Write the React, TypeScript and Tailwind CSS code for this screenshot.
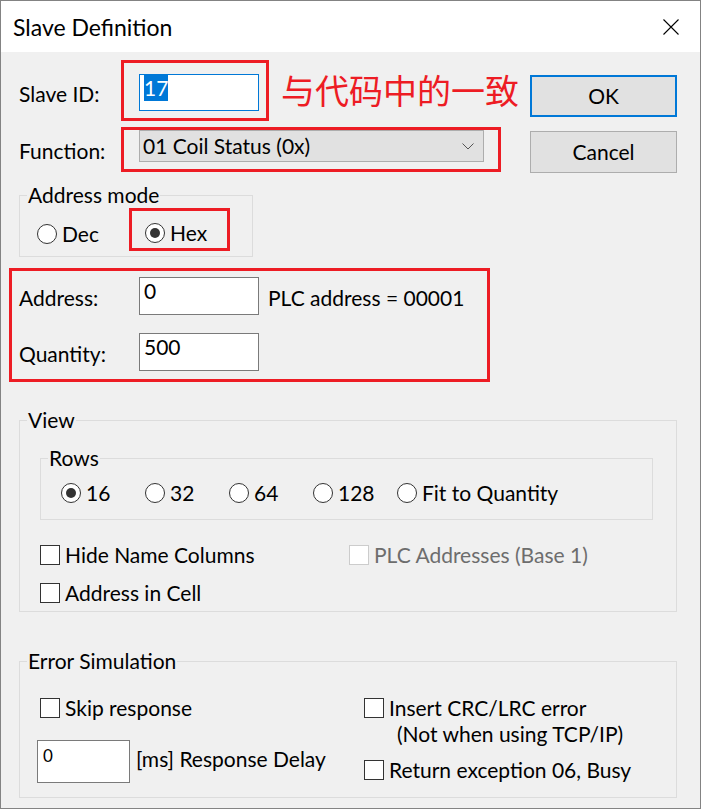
import clsx from "clsx";
import type { ReactNode } from "react";

function Radio({
  label,
  checked = false,
  className,
}: {
  label: string;
  checked?: boolean;
  className?: string;
}) {
  return (
    <label className={clsx("flex items-center gap-[5px]", className)}>
      <span className="flex h-[20px] w-[20px] shrink-0 items-center justify-center rounded-full border border-[#333333] bg-white">
        {checked && <span className="h-[10px] w-[10px] rounded-full bg-[#333333]" />}
      </span>
      <span>{label}</span>
    </label>
  );
}

function Check({
  label,
  disabled = false,
  className,
}: {
  label: string;
  disabled?: boolean;
  className?: string;
}) {
  return (
    <label className={clsx("flex items-center gap-[5px]", className)}>
      <span
        className={clsx(
          "h-[20px] w-[20px] shrink-0 border bg-white",
          disabled ? "border-[#cccccc]" : "border-[#333333]",
        )}
      />
      <span className={disabled ? "text-[#6d6d6d]" : undefined}>{label}</span>
    </label>
  );
}

function GroupBox({
  title,
  className,
  children,
}: {
  title: string;
  className?: string;
  children: ReactNode;
}) {
  return (
    <fieldset className={clsx("border border-[#dcdcdc]", className)}>
      <legend className="ml-[7px] px-[1px] leading-[26px]">{title}</legend>
      {children}
    </fieldset>
  );
}

function TextBox({ value }: { value: string }) {
  return (
    <div className="h-[38px] w-[120px] border border-[#7a7a7a] bg-white pl-[4px]">
      {value}
    </div>
  );
}

export default function App() {
  return (
    <div className="flex h-[809px] w-[701px] flex-col overflow-hidden border border-[#838383] bg-[#f0f0f0] font-['Lato',sans-serif] text-[21px] leading-[26px] text-black">
      {/* title bar */}
      <div className="flex h-[51px] shrink-0 items-center justify-between bg-white pl-[12px] pr-[21px]">
        <span className="text-[23px]">Slave Definition</span>
        <svg width="16" height="16" viewBox="0 0 16 16" fill="none">
          <path d="M0.5 0.5 L15.5 15.5 M15.5 0.5 L0.5 15.5" stroke="#000" strokeWidth="1.1" />
        </svg>
      </div>

      {/* slave id / function + buttons */}
      <div className="flex shrink-0 pt-[8px]">
        <div className="w-[529px]">
          <div className="flex items-start">
            <span className="mt-[21px] w-[120px] pl-[18px]">Slave ID:</span>
            <div className="h-[61px] w-[148px] border-[3px] border-[#ed1c24] pl-[15px] pt-[11px]">
              <div className="h-[37px] w-[120px] border border-[#0078d7] bg-white pl-[4px]">
                <span className="inline-block h-[26px] bg-[#0078d7] text-white">17</span>
              </div>
            </div>
            <span className="ml-[12px] mt-[13px] font-['Noto_Sans_CJK_SC',sans-serif] text-[34px] leading-[34px] text-[#ed1c24]">
              与代码中的一致
            </span>
          </div>
          <div className="mt-[6px] flex items-start">
            <span className="mt-[11px] w-[120px] pl-[18px]">Function:</span>
            <div className="h-[45px] w-[380px] border-[3px] border-[#ed1c24] pl-[15px]">
              <div className="flex h-[32px] w-[345px] items-center justify-between border border-[#adadad] bg-[#e1e1e1] pl-[3px] pr-[9px]">
                <span>01 Coil Status (0x)</span>
                <svg width="12" height="7" viewBox="0 0 12 7" fill="none">
                  <path d="M0.5 0.5 L6 6 L11.5 0.5" stroke="#555555" strokeWidth="1" />
                </svg>
              </div>
            </div>
          </div>
        </div>
        <div className="flex w-[147px] flex-col pt-[15px]">
          <button className="h-[42px] border-2 border-[#0078d7] bg-[#e1e1e1]">OK</button>
          <button className="mt-[14px] h-[42px] border border-[#adadad] bg-[#e1e1e1]">Cancel</button>
        </div>
      </div>

      {/* address mode */}
      <GroupBox title="Address mode" className="ml-[18px] mt-[9px] w-[234px] shrink-0 pb-[5px]">
        <div className="flex items-start pl-[17px]">
          <Radio label="Dec" className="mt-[13px] w-[92px]" />
          <div className="h-[43px] w-[101px] border-[3px] border-[#ed1c24] pl-[13px] pt-[9px]">
            <Radio label="Hex" checked />
          </div>
        </div>
      </GroupBox>

      {/* address / quantity */}
      <div className="ml-[8px] mt-[11px] h-[114px] w-[481px] shrink-0 border-[3px] border-[#ed1c24] pl-[7px] pt-[6px]">
        <div className="flex items-start">
          <span className="mt-[8px] w-[120px]">Address:</span>
          <TextBox value="0" />
          <span className="ml-[9px] mt-[8px]">PLC address = 00001</span>
        </div>
        <div className="mt-[18px] flex items-start">
          <span className="mt-[8px] w-[120px]">Quantity:</span>
          <TextBox value="500" />
        </div>
      </div>

      {/* view */}
      <GroupBox title="View" className="ml-[18px] mt-[25px] w-[658px] shrink-0 pb-[5px]">
        <GroupBox title="Rows" className="ml-[20px] mt-[12px] w-[613px] pb-[13px]">
          <div className="flex pl-[20px] pt-[9px]">
            <Radio label="16" checked className="w-[84px]" />
            <Radio label="32" className="w-[84px]" />
            <Radio label="64" className="w-[84px]" />
            <Radio label="128" className="w-[84px]" />
            <Radio label="Fit to Quantity" />
          </div>
        </GroupBox>
        <div className="mt-[22px] flex pl-[20px]">
          <Check label="Hide Name Columns" className="w-[309px]" />
          <Check label="PLC Addresses (Base 1)" disabled />
        </div>
        <div className="mt-[12px] pl-[20px]">
          <Check label="Address in Cell" />
        </div>
      </GroupBox>

      {/* error simulation */}
      <GroupBox title="Error Simulation" className="ml-[18px] mt-[36px] w-[658px] shrink-0 pb-[14px]">
        <div className="flex pt-[21px]">
          <div className="w-[344px] pl-[17px]">
            <Check label="Skip response" className="ml-[3px]" />
            <div className="mt-[19px] flex items-start">
              <div className="h-[43px] w-[93px] border border-[#7a7a7a] bg-white pl-[5px] pt-[4px] text-[17px] leading-[22px]">
                0
              </div>
              <span className="ml-[6px] mt-[6px]">[ms] Response Delay</span>
            </div>
          </div>
          <div>
            <Check label="Insert CRC/LRC error" />
            <div className="pl-[33px]">(Not when using TCP/IP)</div>
            <Check label="Return exception 06, Busy" className="mt-[10px]" />
          </div>
        </div>
      </GroupBox>
    </div>
  );
}
